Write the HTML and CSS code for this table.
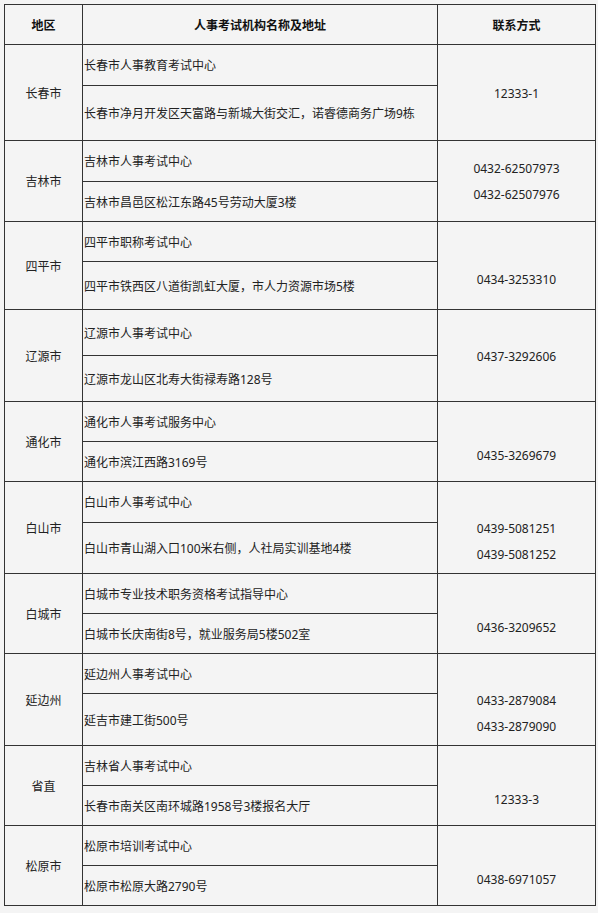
FILE: index.html
```html
<!DOCTYPE html>
<html lang="zh-CN">
<head>
<meta charset="utf-8">
<title>人事考试机构名称及地址</title>
<link rel="stylesheet" href="styles.css">
</head>
<body>
<table class="exam-table">
  <colgroup>
    <col class="c-area">
    <col class="c-org">
    <col class="c-tel">
  </colgroup>
  <thead>
    <tr class="h40">
      <th>地区</th>
      <th>人事考试机构名称及地址</th>
      <th>联系方式</th>
    </tr>
  </thead>
  <tbody>
    <tr class="h41">
      <td class="area" rowspan="2">长春市</td>
      <td class="org">长春市人事教育考试中心</td>
      <td class="tel" rowspan="2"><p>12333-1</p></td>
    </tr>
    <tr class="h55"><td class="org">长春市净月开发区天富路与新城大街交汇，诺睿德商务广场9栋</td></tr>

    <tr class="h41">
      <td class="area" rowspan="2">吉林市</td>
      <td class="org">吉林市人事考试中心</td>
      <td class="tel" rowspan="2"><p>0432-62507973</p><p>0432-62507976</p></td>
    </tr>
    <tr class="h40"><td class="org">吉林市昌邑区松江东路45号劳动大厦3楼</td></tr>

    <tr class="h40">
      <td class="area" rowspan="2">四平市</td>
      <td class="org">四平市职称考试中心</td>
      <td class="tel" rowspan="2"><p>&nbsp;</p><p>0434-3253310</p></td>
    </tr>
    <tr class="h48"><td class="org">四平市铁西区八道街凯虹大厦，市人力资源市场5楼</td></tr>

    <tr class="h46">
      <td class="area" rowspan="2">辽源市</td>
      <td class="org">辽源市人事考试中心</td>
      <td class="tel" rowspan="2"><p>0437-3292606</p></td>
    </tr>
    <tr class="h46"><td class="org">辽源市龙山区北寿大街禄寿路128号</td></tr>

    <tr class="h40">
      <td class="area" rowspan="2">通化市</td>
      <td class="org">通化市人事考试服务中心</td>
      <td class="tel" rowspan="2"><p>&nbsp;</p><p>0435-3269679</p></td>
    </tr>
    <tr class="h40"><td class="org">通化市滨江西路3169号</td></tr>

    <tr class="h41">
      <td class="area" rowspan="2">白山市</td>
      <td class="org">白山市人事考试中心</td>
      <td class="tel" rowspan="2"><p>&nbsp;</p><p>0439-5081251</p><p>0439-5081252</p></td>
    </tr>
    <tr class="h51"><td class="org">白山市青山湖入口100米右侧，人社局实训基地4楼</td></tr>

    <tr class="h40">
      <td class="area" rowspan="2">白城市</td>
      <td class="org">白城市专业技术职务资格考试指导中心</td>
      <td class="tel" rowspan="2"><p>&nbsp;</p><p>0436-3209652</p></td>
    </tr>
    <tr class="h40"><td class="org">白城市长庆南街8号，就业服务局5楼502室</td></tr>

    <tr class="h40">
      <td class="area" rowspan="2">延边州</td>
      <td class="org">延边州人事考试中心</td>
      <td class="tel" rowspan="2"><p>&nbsp;</p><p>0433-2879084</p><p>0433-2879090</p></td>
    </tr>
    <tr class="h52"><td class="org">延吉市建工街500号</td></tr>

    <tr class="h40">
      <td class="area" rowspan="2">省直</td>
      <td class="org">吉林省人事考试中心</td>
      <td class="tel" rowspan="2"><p>&nbsp;</p><p>12333-3</p></td>
    </tr>
    <tr class="h40"><td class="org">长春市南关区南环城路1958号3楼报名大厅</td></tr>

    <tr class="h40">
      <td class="area" rowspan="2">松原市</td>
      <td class="org">松原市培训考试中心</td>
      <td class="tel" rowspan="2"><p>&nbsp;</p><p>0438-6971057</p></td>
    </tr>
    <tr class="h40"><td class="org">松原市松原大路2790号</td></tr>
  </tbody>
</table>
</body>
</html>
```

FILE: styles.css
```css
html, body {
  margin: 0;
  padding: 0;
  background: #f4f4f4;
}

body {
  padding: 4px 0 0 4px;
  font-family: "Noto Sans", "Noto Sans CJK SC", "Microsoft YaHei", sans-serif;
  font-size: 12px;
  color: #222;
}

.exam-table {
  border-collapse: collapse;
  table-layout: fixed;
  width: 591px;
  border: 1px solid #333;
  background: #f4f4f4;
}

.c-area { width: 78px; }
.c-org { width: 355px; }
.c-tel { width: 158px; }

.exam-table th,
.exam-table td {
  border: 1px solid #333;
  padding: 2px 0 0 0;
  vertical-align: middle;
  line-height: 20px;
}

.exam-table th {
  font-weight: bold;
  text-align: center;
  color: #111;
}

.area {
  text-align: center;
}

.exam-table .org {
  text-align: left;
  padding-left: 1px;
  white-space: nowrap;
}

.tel {
  text-align: center;
}

.tel p {
  margin: 0;
  line-height: 26px;
}

.h40 { height: 40px; }
.h41 { height: 41px; }
.h46 { height: 46px; }
.h48 { height: 48px; }
.h51 { height: 51px; }
.h52 { height: 52px; }
.h55 { height: 55px; }
```
